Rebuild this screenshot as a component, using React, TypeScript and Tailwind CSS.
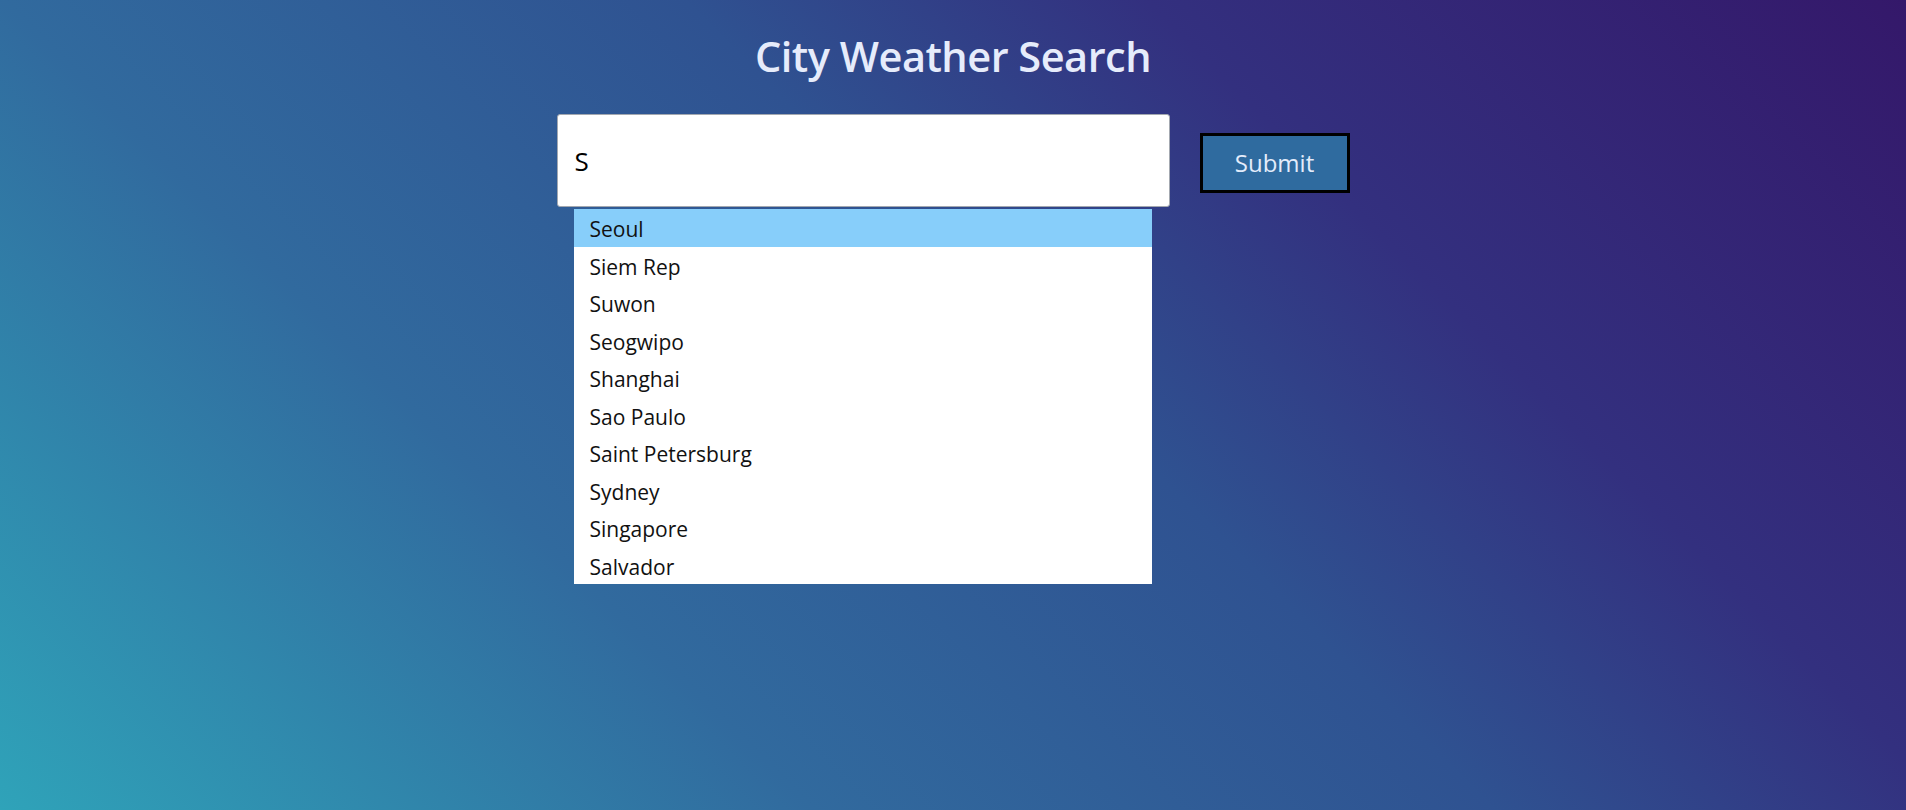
import React from 'react';

const CITIES = [
    'Seoul',
    'Siem Rep',
    'Suwon',
    'Seogwipo',
    'Shanghai',
    'Sao Paulo',
    'Saint Petersburg',
    'Sydney',
    'Singapore',
    'Salvador',
];

const App: React.FC = () => {
    return (
        <div className="min-h-screen w-full bg-[linear-gradient(45deg,#2fa3b9_0%,#316a9e_30%,#2f5291_55%,#33307f_72%,#34186a_100%)] font-['Open_Sans','Liberation_Sans',sans-serif]">
            <h1 className="pt-[29px] text-center text-[41.5px] font-semibold leading-[54px] tracking-[-0.5px] text-[#e6ecfb]">
                City Weather Search
            </h1>

            <div className="mt-[31px] flex items-center justify-center gap-[30px]">
                <div className="relative">
                    <input
                        type="text"
                        value="S"
                        readOnly
                        className="block h-[93px] w-[613px] rounded-[3px] border border-[#a3a8b0] bg-white pl-[17px] text-[26px] text-black outline-none"
                    />
                    <ul className="absolute left-[17px] top-full mt-[2px] w-[578px] bg-white">
                        {CITIES.map((city, i) => (
                            <li
                                key={city}
                                className={
                                    i === 0
                                        ? 'h-[37.5px] bg-[#87cefa] pl-4 pt-[3px] text-[21px] leading-[35px] text-[#111]'
                                        : 'h-[37.5px] pl-4 pt-[3px] text-[21px] leading-[35px] text-[#111]'
                                }
                            >
                                {city}
                            </li>
                        ))}
                    </ul>
                </div>
                <button className="mt-[5px] h-[60px] w-[150px] border-[3px] border-black bg-[#2f6b9f] text-[24px] text-[#e3ecfb]">
                    Submit
                </button>
            </div>
        </div>
    );
};

export default App;
